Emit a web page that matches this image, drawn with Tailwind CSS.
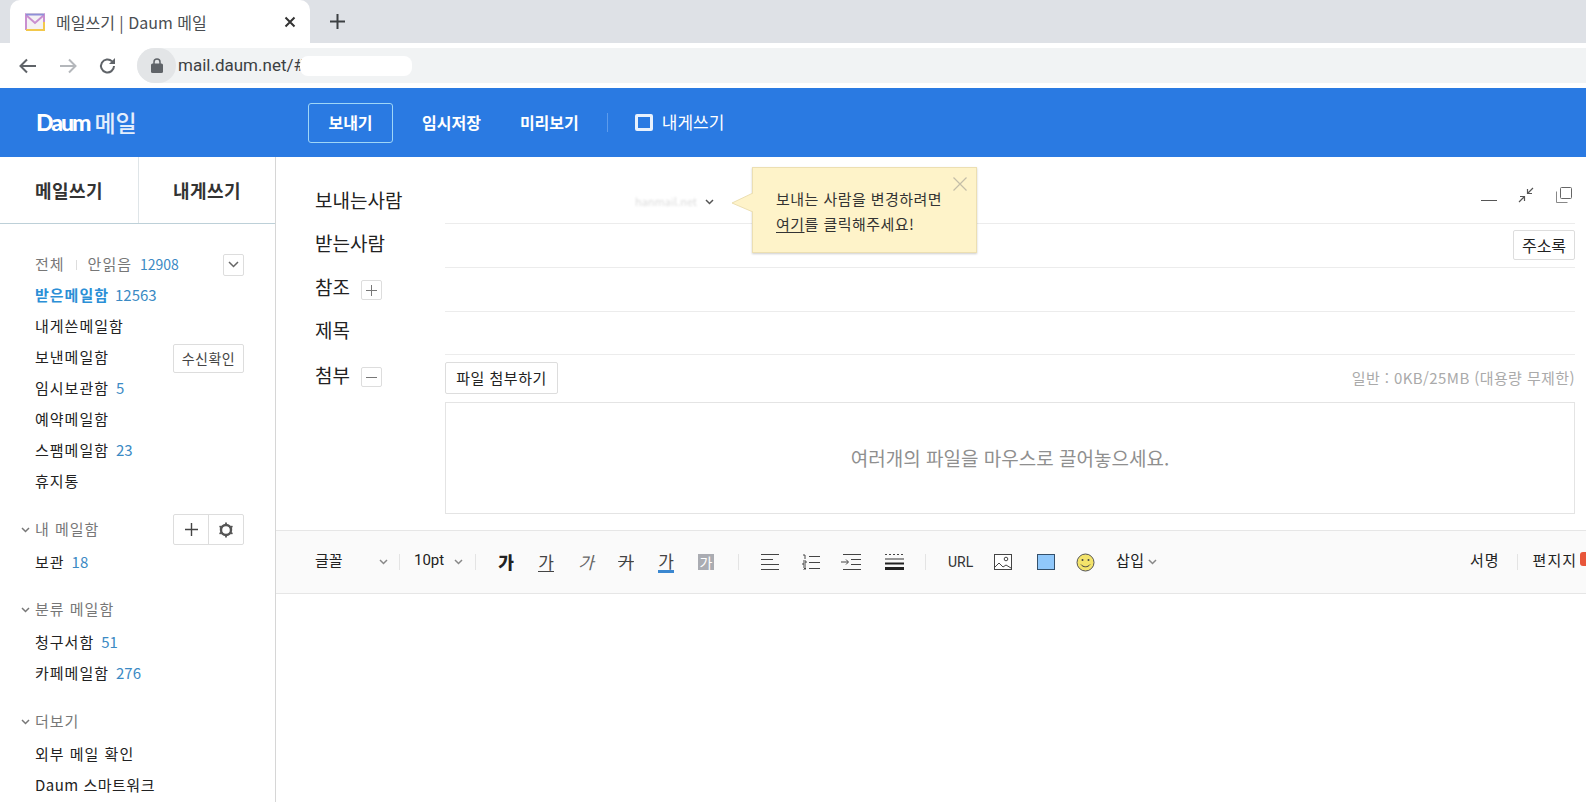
<!DOCTYPE html>
<html lang="ko">
<head>
<meta charset="UTF-8" />
<title>메일쓰기 | Daum 메일</title>
<script src="https://cdn.jsdelivr.net/npm/@tailwindcss/browser@4"></script>
</head>
<body class="bg-white">
<div class="w-[1586px] h-[802px] overflow-hidden flex flex-col font-['Noto_Sans_CJK_KR','Noto_Sans',sans-serif] text-[#222]">

  <!-- browser tabs -->
  <div class="h-[43px] bg-[#dee1e6] flex items-stretch shrink-0">
    <div class="ml-[10px] w-[300px] bg-white rounded-t-[10px] flex items-center">
      <svg class="ml-[15px] w-[20px] h-[18px]" viewBox="0 0 20 18"><rect x="0.5" y="0.5" width="19" height="17" rx="2" fill="#f6d9b8"/><path d="M1 2h18v15H1z" fill="#f4f1f4"/><path d="M1 17V2l9 8 9-8v15" fill="none" stroke="#c98fd0" stroke-width="2"/><path d="M1 17h18V9" fill="none" stroke="#f2c84b" stroke-width="2"/><path d="M1 1.5h18" stroke="#8f8fd8" stroke-width="2"/></svg>
      <span class="ml-[11px] text-[16px] text-[#4a4d51] whitespace-nowrap">메일쓰기 | Daum 메일</span>
      <svg class="ml-auto mr-[14px] w-[12px] h-[12px]" viewBox="0 0 12 12"><path d="M1.5 1.5l9 9M10.500 1.500l-9 9" stroke="#333" stroke-width="2"/></svg>
    </div>
    <svg class="ml-[20px] self-center w-[15px] h-[15px]" viewBox="0 0 15 15"><path d="M7.500 0v15M0 7.500h15" stroke="#3c4043" stroke-width="2"/></svg>
  </div>

  <!-- address bar -->
  <div class="h-[45px] shrink-0 flex items-start pt-[5px] bg-white">
    <div class="w-[137px] h-[35px] flex items-center">
      <svg class="ml-[19px] w-[18px] h-[16px]" viewBox="0 0 18 16"><path d="M17 8H2M8 1.500L1.500 8 8 14.500" fill="none" stroke="#5f6368" stroke-width="2"/></svg>
      <svg class="ml-[22px] w-[18px] h-[16px]" viewBox="0 0 18 16"><path d="M1 8h15M10 1.500L16.500 8 10 14.500" fill="none" stroke="#b4b7bb" stroke-width="2"/></svg>
      <svg class="ml-[22px] w-[18px] h-[18px]" viewBox="0 0 18 18"><path d="M15 9a6.500 6.500 0 1 1-1.900-4.600" fill="none" stroke="#5f6368" stroke-width="2"/><path d="M16 1v6h-6z" fill="#5f6368"/></svg>
    </div>
    <div class="flex-1 h-[35px] bg-[#f1f3f4] rounded-l-full flex items-center">
      <div class="w-[39px] h-[35px] rounded-full bg-[#e3e5e7] flex items-center justify-center">
        <svg class="w-[12px] h-[15px]" viewBox="0 0 12 15"><path d="M3 6V4a3 3 0 0 1 6 0v2" fill="none" stroke="#5f6368" stroke-width="1.500"/><rect y="5.500" width="12" height="9.500" rx="1.500" fill="#5f6368"/></svg>
      </div>
      <span class="ml-[2px] text-[17px] text-[#3c4043] font-['Roboto',sans-serif] whitespace-nowrap">mail.daum.net/#</span>
      <span class="-ml-[4px] w-[112px] h-[20px] bg-white rounded-[8px]"></span>
    </div>
  </div>

  <!-- blue header -->
  <header class="h-[69px] shrink-0 bg-[#2a7ae2] text-white flex items-center">
    <div class="ml-[36px] w-[272px] flex items-center">
      <span class="text-[23px] font-black tracking-[-2px] font-['Lato',sans-serif]">Daum</span>
      <span class="ml-[5px] text-[23px] font-medium text-[#e3eefc]">메일</span>
    </div>
    <button class="w-[85px] h-[40px] border border-[#9fd6f7] rounded-[3px] text-[16px] font-bold pb-[2px]">보내기</button>
    <span class="ml-[29px] text-[16px] font-bold mb-[2px]">임시저장</span>
    <span class="ml-[39px] text-[16px] font-bold mb-[2px]">미리보기</span>
    <span class="ml-[28px] w-px h-[19px] bg-[#5c9bec]"></span>
    <span class="ml-[27px] w-[18px] h-[17px] border-[3px] border-[#e8f1fd] rounded-[2px]"></span>
    <span class="ml-[9px] text-[17px] mb-[2px]">내게쓰기</span>
  </header>

  <div class="flex-1 flex min-h-0">
    <!-- sidebar -->
    <aside class="w-[276px] shrink-0 border-r border-[#d6d6d6] text-[15px] tracking-[1px]">
      <div class="h-[67px] flex border-b border-[#bdd0d8] text-[18px] tracking-[0.5px] font-bold text-[#333]">
        <div class="w-[139px] border-r border-[#dfe5e8] flex items-center justify-center">메일쓰기</div>
        <div class="flex-1 flex items-center justify-center">내게쓰기</div>
      </div>
      <div class="pt-[25px] pl-[35px] pr-[31px]">
        <div class="h-[31px] flex items-center text-[#777]">
          <span>전체</span><span class="mx-[11px] w-px h-[10px] bg-[#ddd]"></span><span>안읽음</span>
          <span class="ml-[8px] text-[14px] tracking-normal text-[#3b8ac4]">12908</span>
          <span class="ml-auto w-[21px] h-[22px] border border-[#ddd] rounded-[2px] flex items-center justify-center">
            <svg class="w-[11px] h-[7px]" viewBox="0 0 11 7"><path d="M1 1l4.500 4.500L10 1" fill="none" stroke="#666" stroke-width="1.500"/></svg>
          </span>
        </div>
        <div class="h-[31px] flex items-center"><span class="font-bold text-[#2b8fd6]">받은메일함</span><span class="ml-[6px] text-[15px] tracking-normal text-[#3b8ac4]">12563</span></div>
        <div class="h-[31px] flex items-center">내게쓴메일함</div>
        <div class="h-[31px] flex items-center">보낸메일함
          <button class="ml-auto mt-[1px] w-[71px] h-[29px] border border-[#ddd] rounded-[2px] text-[14px] tracking-[0.5px] text-[#444]">수신확인</button>
        </div>
        <div class="h-[31px] flex items-center">임시보관함<span class="ml-[7px] text-[15px] tracking-normal text-[#3b8ac4]">5</span></div>
        <div class="h-[31px] flex items-center">예약메일함</div>
        <div class="h-[31px] flex items-center">스팸메일함<span class="ml-[7px] text-[15px] tracking-normal text-[#3b8ac4]">23</span></div>
        <div class="h-[31px] flex items-center">휴지통</div>

        <div class="relative mt-[17px] h-[31px] flex items-center text-[#777]">
          <svg class="absolute left-[-14px] top-[13px] w-[9px] h-[6px]" viewBox="0 0 9 6"><path d="M1 1l3.500 3.500L8 1" fill="none" stroke="#777" stroke-width="1.500"/></svg>
          내 메일함
          <div class="ml-auto w-[71px] h-[31px] border border-[#ddd] rounded-[2px] flex">
            <span class="w-[35px] border-r border-[#ddd] flex items-center justify-center">
              <svg class="w-[15px] h-[15px]" viewBox="0 0 15 15"><path d="M7.500 1v13M1 7.500h13" stroke="#444" stroke-width="1.400"/></svg>
            </span>
            <span class="flex-1 flex items-center justify-center">
              <svg class="w-[16px] h-[16px]" viewBox="0 0 16 16"><circle cx="8" cy="8" r="5" fill="none" stroke="#555" stroke-width="2.400"/><path d="M8 0.500v3M8 12.500v3M1.500 4.200l2.600 1.500M11.900 10.300l2.600 1.500M1.500 11.800l2.600-1.500M11.900 5.700l2.600-1.500" stroke="#555" stroke-width="1.800"/></svg>
            </span>
          </div>
        </div>
        <div class="mt-[2px] h-[31px] flex items-center">보관<span class="ml-[7px] text-[15px] tracking-normal text-[#3b8ac4]">18</span></div>

        <div class="relative mt-[16px] h-[31px] flex items-center text-[#777]">
          <svg class="absolute left-[-14px] top-[13px] w-[9px] h-[6px]" viewBox="0 0 9 6"><path d="M1 1l3.500 3.500L8 1" fill="none" stroke="#777" stroke-width="1.500"/></svg>
          분류 메일함
        </div>
        <div class="mt-[2px] h-[31px] flex items-center">청구서함<span class="ml-[7px] text-[15px] tracking-normal text-[#3b8ac4]">51</span></div>
        <div class="h-[31px] flex items-center">카페메일함<span class="ml-[7px] text-[15px] tracking-normal text-[#3b8ac4]">276</span></div>

        <div class="relative mt-[17px] h-[31px] flex items-center text-[#777]">
          <svg class="absolute left-[-14px] top-[13px] w-[9px] h-[6px]" viewBox="0 0 9 6"><path d="M1 1l3.500 3.500L8 1" fill="none" stroke="#777" stroke-width="1.500"/></svg>
          더보기
        </div>
        <div class="mt-[2px] h-[31px] flex items-center">외부 메일 확인</div>
        <div class="h-[31px] flex items-center tracking-[0.5px]">Daum 스마트워크</div>
      </div>
    </aside>

    <!-- compose -->
    <main class="flex-1 min-w-0 flex flex-col">
      <div class="relative pt-[23px] pl-[39px] pr-[11px]">
        <!-- sender -->
        <div class="flex h-[44px]">
          <div class="w-[130px] flex items-center text-[19px] pb-[3px]">보내는사람</div>
          <div class="flex-1 border-b border-[#ececec] flex items-center">
            <span class="ml-[190px] w-[60px] text-[11px] text-[#dcdcdc] blur-[0.8px] whitespace-nowrap text-right">hanmail.net</span>
            <svg class="ml-[10px] w-[9px] h-[6px]" viewBox="0 0 9 6"><path d="M1 1l3.500 3.500L8 1" fill="none" stroke="#555" stroke-width="1.500"/></svg>
            <div class="ml-auto mr-[3px] mb-[13px] flex items-center">
              <span class="mt-[11px] w-[16px] h-px bg-[#555]"></span>
              <svg class="ml-[21px] w-[16px] h-[16px]" viewBox="0 0 16 16"><path d="M1 15l5-5M2 9.500h4.500V14M15 1L10 6M14 6.500H9.500V2" fill="none" stroke="#555" stroke-width="1.200"/></svg>
              <svg class="ml-[22px] w-[16px] h-[16px]" viewBox="0 0 16 16"><rect x="4.500" y="0.500" width="11" height="11" rx="1" fill="none" stroke="#666"/><path d="M0.500 4.500v11h11" fill="none" stroke="#888"/></svg>
            </div>
          </div>
        </div>
        <!-- recipients -->
        <div class="flex h-[44px]">
          <div class="w-[130px] flex items-center text-[19px] pb-[5px]">받는사람</div>
          <div class="flex-1 border-b border-[#ececec] flex items-center justify-end pb-[1px]">
            <button class="w-[62px] h-[30px] border border-[#ddd] rounded-[2px] text-[16px]">주소록</button>
          </div>
        </div>
        <div class="flex h-[44px]">
          <div class="w-[130px] flex items-center text-[19px]">
            <span class="pb-[5px]">참조</span>
            <span class="ml-[11px] w-[21px] h-[20px] border border-[#ddd] rounded-[2px] flex items-center justify-center">
              <svg class="w-[11px] h-[11px]" viewBox="0 0 11 11"><path d="M5.500 0v11M0 5.500h11" stroke="#777"/></svg>
            </span>
          </div>
          <div class="flex-1 border-b border-[#ececec]"></div>
        </div>
        <div class="flex h-[43px]">
          <div class="w-[130px] flex items-center text-[19px] pb-[7px]">제목</div>
          <div class="flex-1 border-b border-[#ececec]"></div>
        </div>
        <!-- attachments -->
        <div class="flex">
          <div class="w-[130px] h-[44px] flex items-center text-[19px]">
            <span class="pb-[3px]">첨부</span>
            <span class="ml-[11px] w-[21px] h-[20px] border border-[#ddd] rounded-[2px] flex items-center justify-center">
              <span class="w-[11px] h-px bg-[#777]"></span>
            </span>
          </div>
          <div class="flex-1 pt-[7px]">
            <div class="flex items-center justify-between">
              <button class="w-[113px] h-[32px] border border-[#ddd] rounded-[2px] text-[15px] tracking-[0.5px]">파일 첨부하기</button>
              <span class="text-[15px] tracking-[0.4px] text-[#aaa]">일반 : 0KB/25MB (대용량 무제한)</span>
            </div>
            <div class="mt-[8px] h-[112px] border border-[#e4e4e4] flex items-center justify-center text-[19px] text-[#8f8f8f]">여러개의 파일을 마우스로 끌어놓으세요.</div>
          </div>
        </div>

        <!-- sender hint -->
        <div class="absolute left-[476px] top-[10px] w-[225px] h-[86px] bg-[#fef3c9] border border-[#ecdfb2] shadow-[0_1px_2px_rgba(0,0,0,0.2)] pt-[18px] pl-[23px] text-[15px] tracking-[0.45px] leading-[25px] text-[#333]">
          <svg class="absolute left-[-22px] top-[24px] w-[23px] h-[24px]" viewBox="0 0 23 24"><path d="M22 1L1 11l21 9z" fill="#fef3c9"/><path d="M22 1L1 11l21 9" fill="none" stroke="#ecdfb2"/></svg>
          <svg class="absolute right-[9px] top-[9px] w-[14px] h-[14px]" viewBox="0 0 14 14"><path d="M0.500 0.500l13 13M13.500 0.500l-13 13" stroke="#c4bda8" stroke-width="1.200"/></svg>
          <p class="relative whitespace-nowrap">보내는 사람을 변경하려면</p>
          <p class="relative whitespace-nowrap"><span class="underline underline-offset-2">여기</span>를 클릭해주세요!</p>
        </div>
      </div>

      <!-- editor toolbar -->
      <div class="mt-[16px] h-[64px] shrink-0 bg-[#fafafa] border-y border-[#e6e6e6] flex items-center pl-[39px] text-[15px]">
        <span class="w-[28px] mb-[3px]">글꼴</span>
        <svg class="ml-[36px] w-[9px] h-[6px]" viewBox="0 0 9 6"><path d="M1 1l3.500 3.500L8 1" fill="none" stroke="#888" stroke-width="1.500"/></svg>
        <span class="ml-[11px] w-px h-[16px] bg-[#e4e4e4]"></span>
        <span class="ml-[14px] w-[32px] font-['Roboto',sans-serif] mb-[3px]">10pt</span>
        <svg class="ml-[8px] w-[9px] h-[6px]" viewBox="0 0 9 6"><path d="M1 1l3.500 3.500L8 1" fill="none" stroke="#888" stroke-width="1.500"/></svg>
        <span class="ml-[12px] w-px h-[16px] bg-[#e4e4e4]"></span>
        <span class="ml-[22px] w-[16px] text-[17px] font-black text-center">가</span>
        <span class="ml-[24px] w-[16px] text-[17px] text-[#444] text-center border-b border-[#444] leading-[19px]">가</span>
        <span class="ml-[24px] w-[16px] text-[17px] italic text-[#666] text-center">가</span>
        <span class="ml-[24px] w-[16px] text-[17px] line-through text-[#444] text-center">가</span>
        <span class="ml-[24px] w-[16px] text-[17px] text-[#444] text-center border-b-[3px] border-[#3a87d0] leading-[18px]">가</span>
        <span class="ml-[24px] w-[16px] h-[16px] bg-[#aaacb2] text-white text-[14px] leading-[16px] text-center">가</span>
        <span class="ml-[24px] w-px h-[16px] bg-[#e4e4e4]"></span>
        <svg class="ml-[22px] w-[18px] h-[16px]" viewBox="0 0 18 16"><path d="M0 .500h18M0 5.500h12M0 10.500h18M0 15.500h18" stroke="#444"/></svg>
        <svg class="ml-[23px] w-[18px] h-[16px]" viewBox="0 0 18 16"><path d="M7 2.500h11M7 8.500h11M7 14.500h11" stroke="#444"/><path d="M1 1h2v4M1 7h3v2H1v2h3M1 13h3M2 14.500h2M1 16h3" fill="none" stroke="#444"/></svg>
        <svg class="ml-[21px] w-[20px] h-[16px]" viewBox="0 0 20 16"><path d="M2 .500h18M10 5.500h10M10 10.500h10M2 15.500h18" stroke="#444"/><path d="M0 8h7M5 5.500L7.500 8 5 10.500" fill="none" stroke="#444"/></svg>
        <svg class="ml-[24px] w-[19px] h-[16px]" viewBox="0 0 19 16"><path d="M0 .500h19" stroke="#444" stroke-dasharray="2 2"/><path d="M0 5h19" stroke="#333"/><path d="M0 9.500h19" stroke="#222" stroke-width="2"/><path d="M0 14.500h19" stroke="#222" stroke-width="3"/></svg>
        <span class="ml-[21px] w-px h-[16px] bg-[#e4e4e4]"></span>
        <span class="ml-[22px] w-[24px] text-[14px] font-['Roboto',sans-serif] text-[#333]">URL</span>
        <svg class="ml-[22px] w-[18px] h-[16px]" viewBox="0 0 18 16"><rect x=".500" y=".500" width="17" height="15" fill="#fff" stroke="#444"/><circle cx="12" cy="5" r="1.800" fill="none" stroke="#444"/><path d="M1 13l4-4 4 4 3-2 5 3" fill="none" stroke="#444"/></svg>
        <span class="ml-[25px] w-[18px] h-[16px] bg-[#90c8fb] border border-[#34506b]"></span>
        <svg class="ml-[21px] w-[19px] h-[19px]" viewBox="0 0 19 19"><circle cx="9.500" cy="9.500" r="8.500" fill="#f3e36b" stroke="#555"/><circle cx="6.500" cy="7" r="1" fill="#444"/><circle cx="12.500" cy="7" r="1" fill="#444"/><path d="M5 11.500c2 3 7 3 9 0" fill="none" stroke="#444"/></svg>
        <span class="ml-[21px] whitespace-nowrap tracking-[0.5px] mb-[3px]">삽입</span>
        <svg class="ml-[3px] w-[9px] h-[6px]" viewBox="0 0 9 6"><path d="M1 1l3.500 3.500L8 1" fill="none" stroke="#888" stroke-width="1.500"/></svg>
        <span class="ml-auto whitespace-nowrap tracking-[1px] mb-[3px]">서명</span>
        <span class="ml-[17px] w-px h-[16px] bg-[#e4e4e4]"></span>
        <span class="ml-[15px] whitespace-nowrap tracking-[1px] mb-[3px]">편지지</span>
        <span class="ml-[3px] w-[6px] h-[14px] bg-[#e8563a] rounded-l-[3px] mb-[6px]"></span>
      </div>
      <div class="flex-1 bg-white"></div>
    </main>
  </div>
</div>
</body>
</html>
